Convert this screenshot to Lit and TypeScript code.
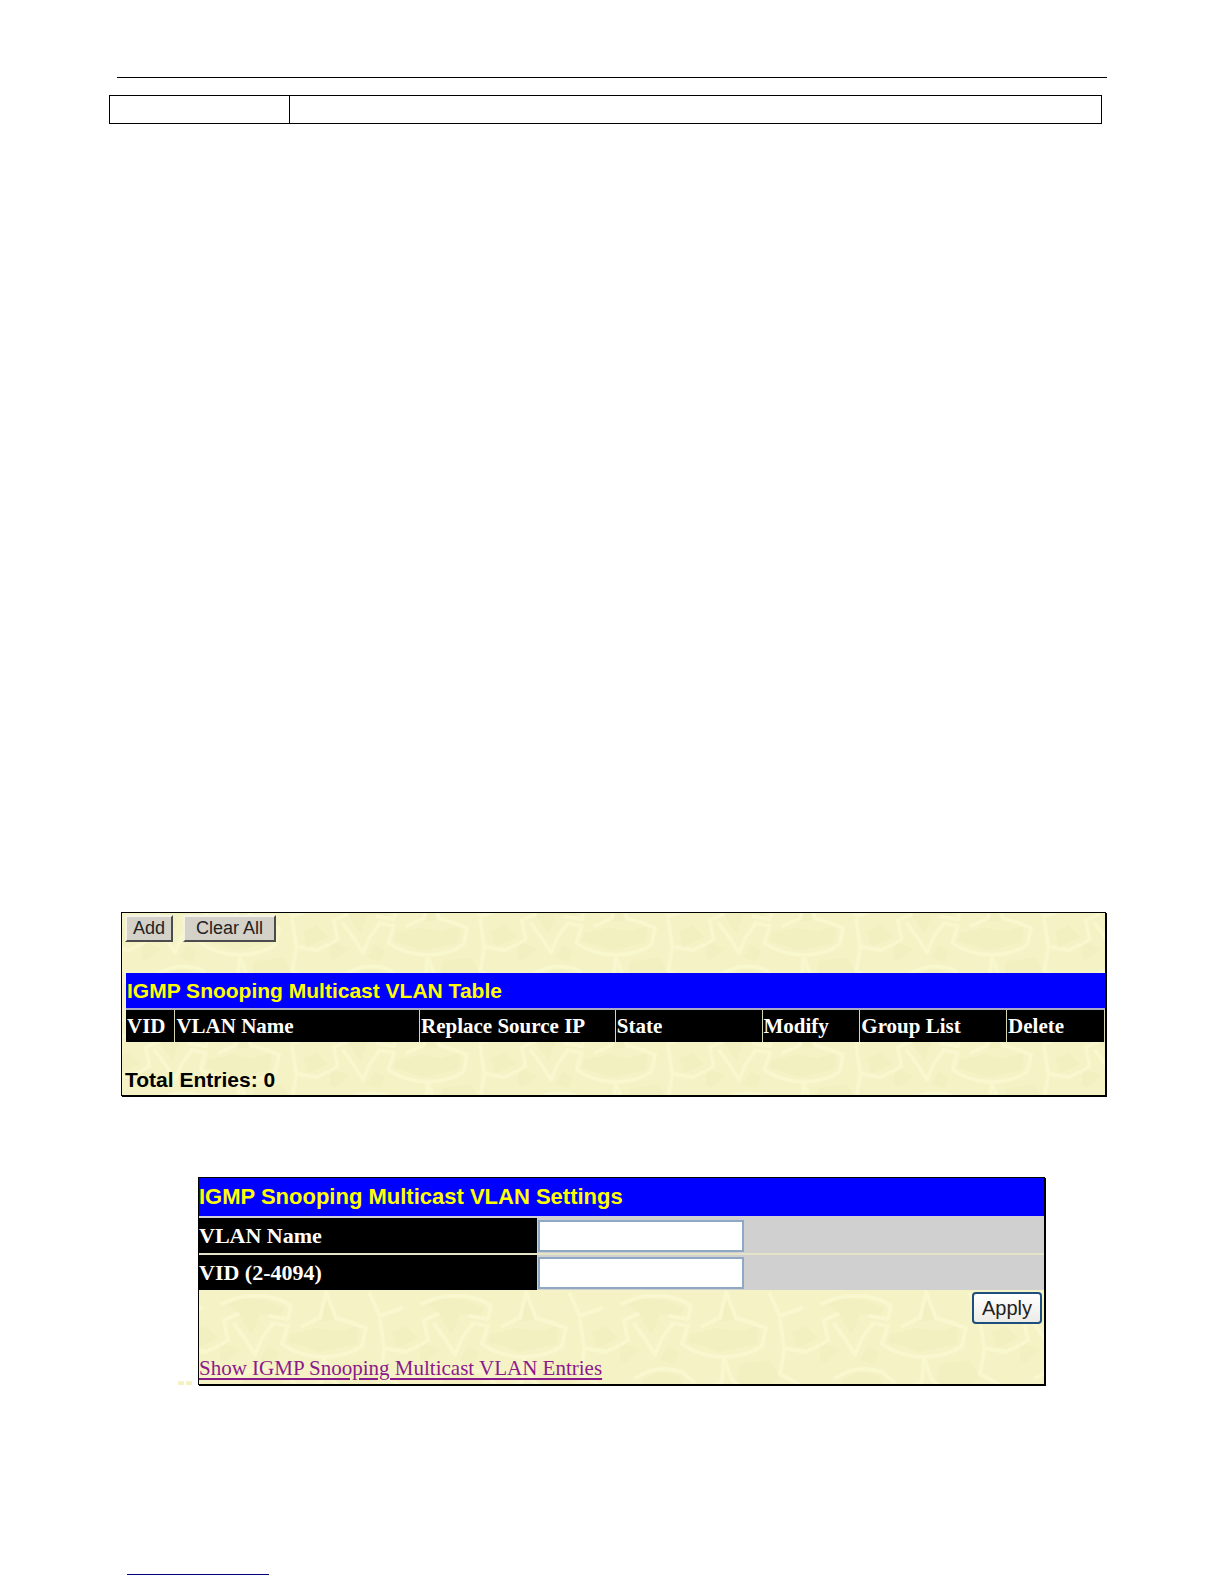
import { LitElement, html, css } from "lit";
import { customElement, property } from "lit/decorators.js";

@customElement("paper-texture")
class PaperTexture extends LitElement {
  @property() placement = "";

  static styles = css`
    :host {
      position: absolute;
      inset: 0;
      display: block;
    }
    .texture {
      display: block;
      width: 100%;
      height: 100%;
    }
  `;

  render() {
    return html`
      <svg class="texture" aria-hidden="true">
        <defs>
          <pattern
            id="weave"
            width="200"
            height="135"
            patternUnits="userSpaceOnUse"
            patternTransform=${this.placement}
          >
            <rect width="200" height="135" fill="#f5f3c5" />
            <g fill="#f2f0c0">
              <path d="M8 14 L22 9 L44 10 L64 18 L60 26 L40 24 L32 44 L20 26 Z" />
              <path d="M70 44 L96 38 L118 42 L138 36 L136 54 L100 62 L68 52 Z" />
              <path d="M98 32 L107 10 L114 30 Z M4 54 L20 60 L6 72 L-8 68 Z" />
              <path d="M172 42 L186 36 L198 48 L176 58 Z M48 56 L58 62 L54 74 L40 70 Z" />
              <path d="M24 90 L38 82 L60 86 L66 100 L40 112 L20 104 Z" />
              <path d="M120 74 L150 70 L160 88 L140 104 L116 96 Z" />
            </g>
            <g fill="none" stroke="#f9f7ce" stroke-width="4" stroke-linejoin="round" stroke-linecap="round">
              <path d="M2 14 Q18 4 44 6 Q60 8 71 16 L68 29 L50 26" />
              <path d="M18 24 L4 30 L8 50 Q0 56 -14 62" />
              <path d="M186 62 L198 56" />
              <path d="M14 34 L26 50 L35 65 L42 48 L52 35" />
              <path d="M52 33 L68 36 L62 54 Q78 66 104 67 Q128 66 142 56 L146 38 L134 34" />
              <path d="M106 2 L100 28 L82 36 M106 2 L116 28 L136 34" />
              <path d="M150 4 L160 26 L182 18 M160 30 L164 58 L186 62" />
              <path d="M16 88 Q36 74 62 82 L74 92 M104 68 L102 92 L84 100" />
              <path d="M104 68 L112 90 L134 106 M164 60 L160 84 L182 96" />
              <path d="M14 104 L32 118 L64 112 L78 124 M110 122 L140 116 L166 126" />
            </g>
          </pattern>
        </defs>
        <rect width="100%" height="100%" fill="url(#weave)" />
      </svg>
    `;
  }
}

@customElement("app-root")
class AppRoot extends LitElement {
  static styles = css`
    :host {
      display: block;
      background: #fff;
      color: #000;
      font-family: "Liberation Serif", "Times New Roman", serif;
      font-size: 21px;
      line-height: 24px;
    }
    .page {
      padding: 77px 117px 8px;
    }
    .rule {
      margin: 0;
      border: 0;
      border-top: 1px solid #000;
    }
    table {
      width: 100%;
      table-layout: fixed;
      border-spacing: 0;
      border-collapse: collapse;
    }
    .continued {
      margin: 17px 5px 0 -8px;
    }
    .continued td {
      height: 27px;
      padding: 0;
      border: 1px solid #000;
    }
    .narrow {
      width: 18%;
    }
    .panel {
      position: relative;
      border: 1px solid #000;
      box-shadow: 1px 1px 0 #000;
    }
    .content {
      position: relative;
    }
    .entries {
      margin: 788px 1px 0 4px;
    }
    .entries .content {
      padding: 2px 0 3px 3px;
    }
    .buttons {
      display: flex;
      gap: 10px;
    }
    button {
      font-family: "Liberation Sans", Arial, sans-serif;
      font-size: 18px;
      line-height: 22px;
      color: #222;
    }
    .classic {
      height: 27px;
      padding: 0 6px 2px;
      border: 2px solid;
      border-color: #f4f3e8 #4c4c4c #4c4c4c #f4f3e8;
      background: #d4d1c8;
    }
    .wide {
      padding: 0 11px 2px;
    }
    .list {
      margin-top: 31px;
      padding: 0 0 0 1px;
    }
    .title {
      font-family: "Liberation Sans", Arial, sans-serif;
      font-weight: bold;
      text-align: left;
      color: #ff0;
      background: #00f;
      padding: 0 1px;
    }
    .list .title {
      height: 35px;
      border-bottom: 2px solid #a9a9c4;
    }
    .list .column {
      height: 32px;
      padding: 0 1px;
      text-align: left;
      color: #fff;
      background: #000;
      border-right: 1px solid #d8d6b0;
    }
    .w5 { width: 5%; }
    .w10 { width: 10%; }
    .w15 { width: 15%; }
    .w20 { width: 20%; }
    .w25 { width: 25%; }
    .w40 { width: 40%; }
    .w60 { width: 60%; }
    .total {
      margin: 26px 0 0;
      font-family: "Liberation Sans", Arial, sans-serif;
      font-weight: bold;
    }
    .settings-row {
      display: flex;
      align-items: flex-end;
      margin: 81px 62px 0 61px;
    }
    .dashes {
      display: flex;
      gap: 2px;
      width: 20px;
      flex: none;
    }
    .dash {
      width: 6px;
      height: 4px;
      background: #f2f2c4;
    }
    .settings {
      flex: 1;
      font-size: 22px;
    }
    .settings .title {
      height: 38px;
      padding: 0;
      border-bottom: 2px solid #d0d0d8;
    }
    .settings .name {
      padding: 0;
      text-align: left;
      color: #fff;
      background: #000;
    }
    .field {
      height: 35px;
      padding: 0 0 0 1px;
      background: #d0d0d0;
    }
    .name,
    .field {
      border-bottom: 2px solid #e6e4c8;
    }
    .last .name,
    .last .field {
      border-bottom: 0;
    }
    input {
      display: block;
      box-sizing: border-box;
      width: 206px;
      height: 32px;
      padding: 2px 4px;
      border: 2px solid #8fa9c4;
      border-radius: 0;
      background: #fff;
      font: inherit;
    }
    .actions {
      display: flex;
      justify-content: flex-end;
      padding: 2px 2px 0 0;
    }
    .apply {
      height: 32px;
      padding: 0 8px;
      border: 2px solid #1d4f7c;
      border-radius: 4px;
      background: linear-gradient(#fff, #ecebe6);
      font-size: 20px;
    }
    .link {
      display: block;
      margin-top: 32px;
      padding-bottom: 3px;
      font-size: 21px;
      line-height: 25px;
      color: #8b1a8b;
      text-underline-offset: 3px;
    }
    .note {
      width: 142px;
      margin: 189px 0 0 10px;
      border: 0;
      border-top: 1px solid #000080;
    }
  `;

  render() {
    return html`
      <main class="page">
        <hr class="rule" />
        <div class="continued">
          <table>
            <tr>
              <td class="narrow"></td>
              <td></td>
            </tr>
          </table>
        </div>

        <section class="panel entries" id="entries">
          <paper-texture placement="translate(20 -21) scale(0.94)"></paper-texture>
          <div class="content">
            <div class="buttons">
              <button class="classic" type="button">Add</button>
              <button class="classic wide" type="button">Clear All</button>
            </div>
            <div class="list">
              <table>
                <colgroup>
                  <col class="w5" />
                  <col class="w25" />
                  <col class="w20" />
                  <col class="w15" />
                  <col class="w10" />
                  <col class="w15" />
                  <col class="w10" />
                </colgroup>
                <thead>
                  <tr>
                    <th class="title" colspan="7">IGMP Snooping Multicast VLAN Table</th>
                  </tr>
                  <tr>
                    ${["VID", "VLAN Name", "Replace Source IP", "State", "Modify", "Group List", "Delete"].map(
                      (name) => html`<th class="column" scope="col">${name}</th>`
                    )}
                  </tr>
                </thead>
              </table>
            </div>
            <p class="total">Total Entries: 0</p>
          </div>
        </section>

        <div class="settings-row">
          <div class="dashes">
            <span class="dash"></span>
            <span class="dash"></span>
          </div>
          <section class="panel settings">
            <paper-texture placement="translate(21 112)"></paper-texture>
            <form class="content">
              <table>
                <colgroup>
                  <col class="w40" />
                  <col class="w60" />
                </colgroup>
                <tr>
                  <th class="title" colspan="2">IGMP Snooping Multicast VLAN Settings</th>
                </tr>
                <tr>
                  <th class="name" scope="row"><label for="vlan-name">VLAN Name</label></th>
                  <td class="field"><input id="vlan-name" type="text" /></td>
                </tr>
                <tr class="last">
                  <th class="name" scope="row"><label for="vid">VID (2-4094)</label></th>
                  <td class="field"><input id="vid" type="text" /></td>
                </tr>
              </table>
              <div class="actions">
                <button class="apply" type="button">Apply</button>
              </div>
              <a class="link" href="#entries">Show IGMP Snooping Multicast VLAN Entries</a>
            </form>
          </section>
        </div>

        <hr class="note" />
      </main>
    `;
  }
}
